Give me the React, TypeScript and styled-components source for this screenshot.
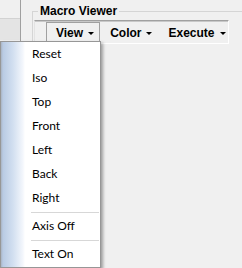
import React from "react";
import styled, { createGlobalStyle } from "styled-components";

const GlobalStyle = createGlobalStyle`
  html, body {
    margin: 0;
    padding: 0;
    background: #f0f0f0;
  }
`;

const Page = styled.div`
  position: relative;
  display: flex;
  width: 242px;
  height: 268px;
  overflow: hidden;
  background: #f0f0f0;
  font-family: "Liberation Sans", Arial, sans-serif;
`;

const SidePanel = styled.div`
  width: 20px;
  flex-shrink: 0;
  border-right: 1px solid #a0a0a0;
  padding-top: 18px;
`;

const SideRow = styled.div<{ $selected?: boolean }>`
  height: 21px;
  border-top: 1px solid #d2d2d2;
  background: ${(p) => (p.$selected ? "#e4e4e4" : "transparent")};
`;

const Main = styled.div`
  flex: 1;
  padding-left: 11px;
`;

const GroupBox = styled.fieldset`
  margin: 4px 0 0 0;
  padding: 2px 0 0 1px;
  min-height: 300px;
  border: 1px solid #d5d5d5;
  border-right: none;
  border-bottom: none;
`;

const GroupTitle = styled.legend`
  margin-left: 4px;
  padding: 0 2px;
  font-size: 12px;
  line-height: 14px;
  font-weight: bold;
  color: #000;
`;

const ToolBar = styled.div`
  display: flex;
  align-items: stretch;
  width: 190px;
  height: 21px;
  box-sizing: content-box;
  padding: 1px 0 0 3px;
  border-top: 1px solid #a0a0a0;
  border-left: 1px solid #e3e3e3;
  border-right: 1px solid #ffffff;
  border-bottom: 1px solid #ffffff;
  box-shadow: inset 0 1px 0 #c8c8c8;
`;

const Grip = styled.div`
  align-self: center;
  width: 4px;
  height: 12px;
  margin: 0 4px;
  background: repeating-linear-gradient(
    to bottom,
    #808080 0 1px,
    #e6e6e6 1px 2px
  );
`;

const MenuButton = styled.div<{ $pressed?: boolean }>`
  display: flex;
  align-items: center;
  gap: 5px;
  height: 20px;
  padding: 0 5px 0 9px;
  border: 1px solid ${(p) => (p.$pressed ? "#a0a0a0" : "transparent")};
  border-bottom: none;
  font-size: 12px;
  line-height: 20px;
  font-weight: bold;
  color: #000;
`;

const Arrow = styled.span`
  width: 0;
  height: 0;
  border-left: 3px solid transparent;
  border-right: 3px solid transparent;
  border-top: 3px solid #000;
  margin-top: 1px;
`;

const Menu = styled.div`
  position: absolute;
  left: 0;
  top: 41px;
  width: 99px;
  padding-top: 1px;
  border: 1px solid #979797;
  background: linear-gradient(
      to right,
      #a9b4c4 0,
      #b9cbe4 2px,
      #d2dff0 12px,
      #f4f7fc 22px,
      #ffffff 24px
    );
  box-shadow: 2px 2px 3px rgba(0, 0, 0, 0.35);
  font-family: Lato, "Liberation Sans", sans-serif;
`;

const MenuItem = styled.div`
  height: 22px;
  padding: 0 0 2px 31px;
  font-size: 12px;
  line-height: 22px;
  color: #000;
`;

const Separator = styled.div`
  height: 3px;
  margin-left: 30px;
  margin-right: 1px;

  &::before {
    content: "";
    display: block;
    margin-top: 1px;
    height: 1px;
    background: #d7d7d7;
  }
`;

const topItems = ["Reset", "Iso", "Top", "Front", "Left", "Back", "Right"];

export default function App(): JSX.Element {
  return (
    <>
      <GlobalStyle />
      <Page>
        <SidePanel>
          <SideRow $selected />
        </SidePanel>
        <Main>
          <GroupBox>
            <GroupTitle>Macro Viewer</GroupTitle>
            <ToolBar>
              <Grip />
              <MenuButton $pressed>
                View
                <Arrow />
              </MenuButton>
              <MenuButton>
                Color
                <Arrow />
              </MenuButton>
              <MenuButton>
                Execute
                <Arrow />
              </MenuButton>
            </ToolBar>
          </GroupBox>
        </Main>
        <Menu>
          {topItems.map((item) => (
            <MenuItem key={item}>{item}</MenuItem>
          ))}
          <Separator />
          <MenuItem>Axis Off</MenuItem>
          <Separator />
          <MenuItem>Text On</MenuItem>
        </Menu>
      </Page>
    </>
  );
}
